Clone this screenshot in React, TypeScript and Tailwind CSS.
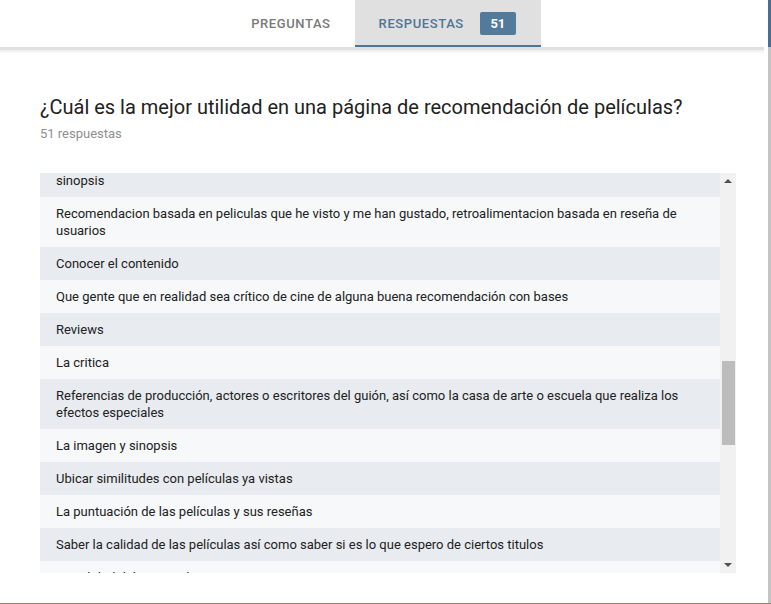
import React from "react";

const rows: string[] = [
  "sinopsis",
  "Recomendacion basada en peliculas que he visto y me han gustado, retroalimentacion basada en reseña de usuarios",
  "Conocer el contenido",
  "Que gente que en realidad sea crítico de cine de alguna buena recomendación con bases",
  "Reviews",
  "La critica",
  "Referencias de producción, actores o escritores del guión, así como la casa de arte o escuela que realiza los efectos especiales",
  "La imagen y sinopsis",
  "Ubicar similitudes con películas ya vistas",
  "La puntuación de las películas y sus reseñas",
  "Saber la calidad de las películas así como saber si es lo que espero de ciertos titulos",
  "La calidad del contenido",
];

export default function App() {
  return (
    <div
      className="relative w-[771px] h-[604px] overflow-hidden bg-white text-[#212121]"
      style={{ fontFamily: "Roboto, 'Liberation Sans', sans-serif" }}
    >
      <div className="flex h-full">
        <div className="flex-1 flex flex-col min-w-0">
          {/* Header */}
          <div className="relative h-[47px] flex justify-center shrink-0 pl-[4px]">
            <div className="flex h-full">
              <div className="h-full px-6 flex items-center text-[13px] font-medium text-[#7a7a7a] tracking-[0.6px]">
                PREGUNTAS
              </div>
              <div className="h-full pl-6 pr-[25px] flex items-center bg-[#e0e0e0] border-b-[2px] border-[#4e7597] pt-[2px]">
                <span className="text-[13px] font-medium text-[#4e7597] tracking-[0.6px]">RESPUESTAS</span>
                <span className="ml-4 w-9 h-[23px] rounded-[2px] bg-[#527a9a] text-white text-[13px] font-bold flex items-center justify-center">
                  51
                </span>
              </div>
            </div>
          </div>
          <div className="h-[3px] bg-[#e0e0e0] shrink-0" />
          <div className="h-[4px] bg-gradient-to-b from-[#eeeeee] to-white shrink-0" />

          {/* Body */}
          <div className="pl-10 pr-[31px] pt-[40px]">
            <h1 className="text-[20px] leading-[26px] font-normal text-[#212121]">
              ¿Cuál es la mejor utilidad en una página de recomendación de películas?
            </h1>
            <div className="mt-[5px] text-[13px] leading-[17px] text-[#8f8f8f]">51 respuestas</div>

            <div className="mt-[31px] flex h-[400px] mr-[-3px]">
              <div className="flex-1 overflow-hidden">
                <div className="-mt-[9px]">
                  {rows.map((r, i) => (
                    <div
                      key={i}
                      className={`px-4 py-2 text-[13px] leading-[17px] text-[#212121] ${
                        i % 2 === 0 ? "bg-[#e8ecf0]" : "bg-[#f6f8fa]"
                      }`}
                    >
                      {r}
                    </div>
                  ))}
                </div>
              </div>
              {/* Fake scrollbar */}
              <div className="w-4 bg-[#f1f1f1] flex flex-col items-center relative">
                <div className="h-4 flex items-center justify-center">
                  <div className="w-0 h-0 border-l-[4px] border-r-[4px] border-b-[4px] border-l-transparent border-r-transparent border-b-[#505050]" />
                </div>
                <div className="mt-[172px] w-[13px] h-[84px] bg-[#bcbcbc]" />
                <div className="flex-1" />
                <div className="h-4 flex items-center justify-center">
                  <div className="w-0 h-0 border-l-[4px] border-r-[4px] border-t-[4px] border-l-transparent border-r-transparent border-t-[#505050]" />
                </div>
              </div>
            </div>
          </div>
        </div>
        {/* right edge bar */}
        <div className="w-[4px] bg-white shrink-0" />
        <div className="w-[3px] flex flex-col shrink-0">
          <div className="h-[47px] bg-[#4a6d93]" />
          <div className="flex-1 bg-[#c4c4c4]" />
        </div>
      </div>
      <div className="absolute left-0 right-0 bottom-0 h-px bg-[#d9636b]" />
    </div>
  );
}
